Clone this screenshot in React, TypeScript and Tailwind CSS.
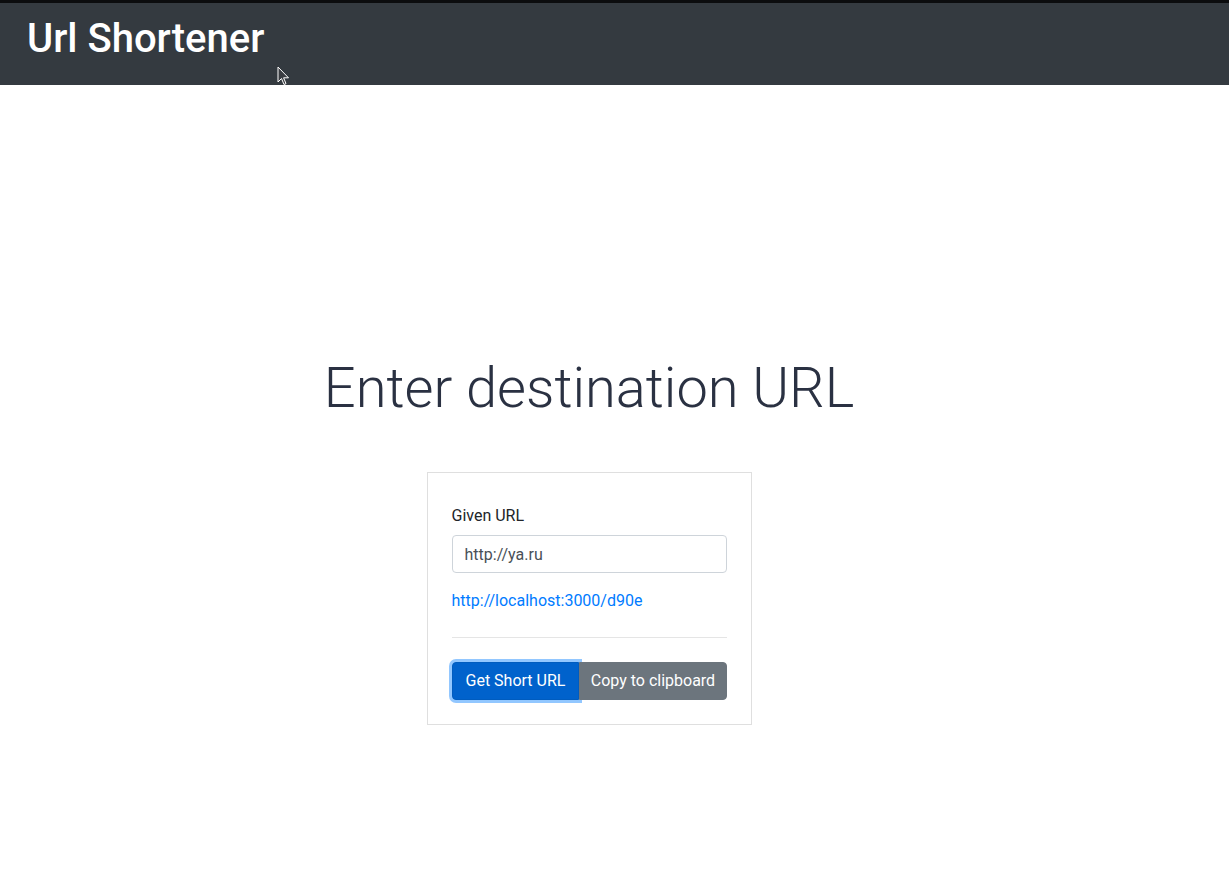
import React from "react";

export default function App() {
  return (
    <div className="min-h-[893px] bg-white relative" style={{ fontFamily: "Roboto, 'Liberation Sans', sans-serif" }}>
      <header className="h-[85px] bg-[#343a40] border-t-[3px] border-[#0b0c0e] pl-[27px] pt-[12px]">
        <h1 className="text-[40px] leading-[48px] font-medium text-white m-0">Url Shortener</h1>
      </header>
      <svg className="absolute left-[277px] top-[66px]" width="14" height="21" viewBox="0 0 14 21">
        <path d="M1 1 L1 16 L4.5 12.5 L7 18.5 L9 17.6 L6.6 11.8 L11.5 11.8 Z" fill="#3a3d42" stroke="#ffffff" strokeWidth="1" strokeLinejoin="round" />
      </svg>
      <main className="flex flex-col items-center pt-[270px] pr-[51px]">
        <h2 className="text-[56px] leading-[67px] font-light text-[#2a3142] m-0">Enter destination URL</h2>
        <div className="mt-[50px] w-[325px] border border-[#dfdfdf] px-[24px] pt-[31px] pb-[24px]">
          <label className="block text-[16px] leading-[24px] text-[#212529] mb-[7px]">Given URL</label>
          <input
            readOnly
            value="http://ya.ru"
            className="block w-full h-[38px] border border-[#ced4da] rounded-[4px] px-[12px] text-[16px] text-[#495057] outline-none"
          />
          <a className="block mt-[16px] text-[16px] leading-[24px] text-[#007bff]" href="#">http://localhost:3000/d90e</a>
          <hr className="mt-[24px] mb-[24px] border-0 border-t border-[#e5e5e5]" />
          <div className="flex">
            <button className="h-[38px] px-[13px] text-[16px] text-white bg-[#0062cc] border border-[#005cbf] rounded-l-[4px] shadow-[0_0_0_3px_rgba(38,143,255,0.5)]">
              Get Short URL
            </button>
            <button className="h-[38px] px-[10px] flex-1 text-[16px] text-white bg-[#6c757d] border border-[#6c757d] rounded-r-[4px]">
              Copy to clipboard
            </button>
          </div>
        </div>
      </main>
    </div>
  );
}
